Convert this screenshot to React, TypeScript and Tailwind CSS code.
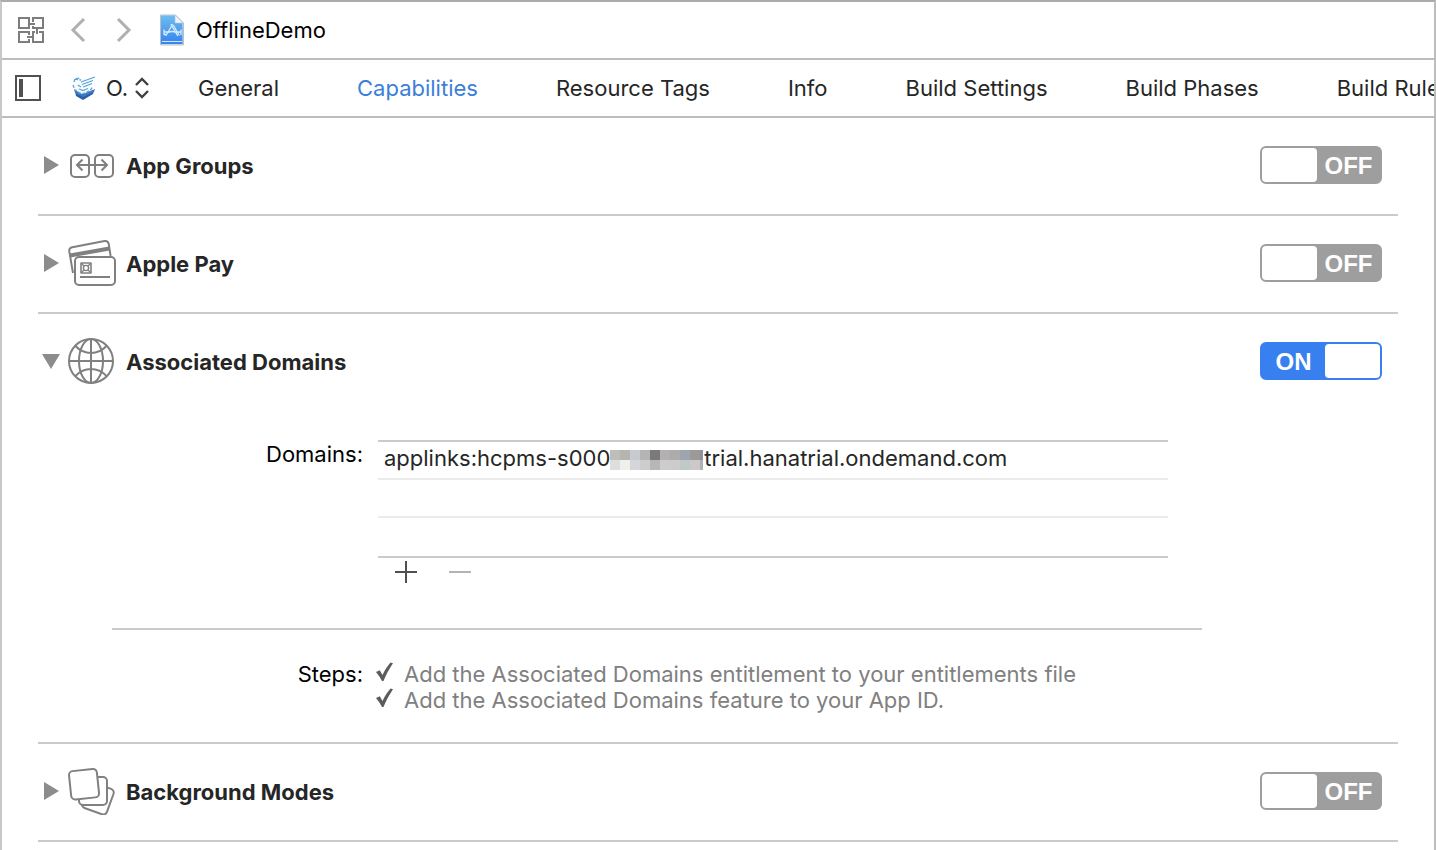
import { useState, type ReactNode } from "react";

const tabs = ["General", "Capabilities", "Resource Tags", "Info", "Build Settings", "Build Phases", "Build Rules"];

const steps = [
  "Add the Associated Domains entitlement to your entitlements file",
  "Add the Associated Domains feature to your App ID.",
];

const maskColors = [
  "#bfbdb8", "#b5b5b0", "#c8cad2", "#b2b5b4", "#7b797c", "#b2b0b0", "#aeabab", "#9fa5ae", "#9b9a94", "#8b93a3",
  "#dddfdf", "#f0f0ea", "#d5d5da", "#cfcccd", "#b7b7b9", "#cbcdce", "#cccccc", "#c2c7c7", "#cdc8c9", "#adb1ba",
];

function RelatedItemsIcon() {
  return (
    <svg width="28" height="28" viewBox="0 0 28 28" fill="none" stroke="#7d7d7d" strokeWidth="2" aria-hidden="true">
      <path d="M2 2h10v10H2zM16 2h10v10H16zM2 16h10v10H2zM16 16h10v10H16z" />
      <path d="M13 8h5M20 13v5M15 21h-5" stroke="white" strokeWidth="4" />
      <path d="M12 8h6M20 12v6M16 21h-6" />
    </svg>
  );
}

function ProjectFileIcon() {
  return (
    <svg width="26" height="32" viewBox="0 0 26 32" aria-hidden="true">
      <defs>
        <linearGradient id="paper" x1="0" y1="0" x2="0" y2="1">
          <stop offset="0" stopColor="#6dbdf0" />
          <stop offset="1" stopColor="#3583ee" />
        </linearGradient>
      </defs>
      <path d="M1.500 1h15l8 8v22h-23z" fill="#dfe5ec" stroke="#b9c0c8" />
      <path d="M2 1.500h14l7.500 7.500v21H2z" fill="url(#paper)" />
      <path d="M16 1v8h8z" fill="#eef4f9" stroke="#a9c5dc" strokeWidth="0.700" />
      <path d="M3 27.500h20" stroke="#cde6ff" />
      <g stroke="#d6ebff" strokeWidth="1.300" fill="none" strokeLinecap="round">
        <path d="M13.500 10.500L7 21.500M12 10.500l6.500 11M14.500 11.500l5.500 9.500M5 18h5M16 18h6M5 16v4.500M22 16v4.500M9 18.500q4-2 8 0M5 20.500h2" />
      </g>
    </svg>
  );
}

function TargetIcon() {
  return (
    <svg width="24" height="24" viewBox="0 0 24 24" aria-hidden="true">
      <path d="M3 15l8 4 11-5-1 4-10 6-7-4z" fill="#2a5ca8" />
      <path d="M2 13l8 5 13-5-1 3-11 5-8-4z" fill="#3f78c0" />
      <path d="M1 8l2 6 8 4 11-5 1-3-3-7-8-1-9 1z" fill="#fafdff" />
      <g stroke="#5ba3d6" strokeWidth="1.300" fill="none">
        <path d="M2 6l1-3 5-1M3 3l6 1M1 9l2 5 5 3 4 .5 6-3 3-4" strokeDasharray="3 1.500" />
        <path d="M9 6l14-5M10 8.500l11-4M11 11l9-3.500M6 9l3 2M7 13l4 1.500 5-2" />
      </g>
    </svg>
  );
}

function AppGroupsIcon() {
  return (
    <svg width="48" height="48" viewBox="0 0 48 48" fill="none" stroke="#808080" strokeWidth="2" aria-hidden="true">
      <rect x="3" y="14" width="18" height="22" rx="4" />
      <rect x="27" y="14" width="18" height="22" rx="4" />
      <path d="M9 24h30M14.500 18.500L9 24l5.500 5.500M33.500 18.500L39 24l-5.500 5.500" />
    </svg>
  );
}

function ApplePayIcon() {
  return (
    <svg width="48" height="48" viewBox="0 0 48 48" fill="none" stroke="#808080" strokeWidth="2" aria-hidden="true">
      <path d="M5 34L1.300 12.500Q.8 9 4.300 8.300L36.500 2Q40 1.500 40.700 4.800L42.600 17" />
      <path d="M2 16.500L41.500 9.500" strokeWidth="4" />
      <rect x="7" y="18" width="40" height="28" rx="4" fill="white" />
      <rect x="13" y="24" width="10" height="10" rx="0.500" strokeWidth="1.600" />
      <circle cx="18" cy="29" r="2.600" strokeWidth="1.400" />
      <path d="M13 24l3 3M23 24l-3 3M13 34l3-3M23 34l-3-3" strokeWidth="1.300" />
      <path d="M12 38h30" />
    </svg>
  );
}

function GlobeIcon() {
  return (
    <svg width="48" height="48" viewBox="0 0 48 48" fill="none" stroke="#808080" strokeWidth="2" aria-hidden="true">
      <circle cx="23" cy="24" r="22" />
      <ellipse cx="23" cy="24" rx="12" ry="22" />
      <path d="M23 2v44M1 24h44M7.500 9Q14 16 23 16T38.500 9M7.500 39Q14 32 23 32T38.500 39" />
    </svg>
  );
}

function BackgroundModesIcon() {
  return (
    <svg width="48" height="48" viewBox="0 0 48 48" fill="white" stroke="#808080" strokeWidth="2" aria-hidden="true">
      <rect x="16.500" y="18" width="26.500" height="27" rx="4" transform="rotate(20 30 31.500)" />
      <rect x="11" y="10" width="28" height="28" rx="4" />
      <rect x="2" y="3" width="28" height="28.500" rx="4" transform="rotate(-6 16 17)" />
    </svg>
  );
}

function CheckIcon() {
  return (
    <svg width="18" height="22" viewBox="0 0 18 22" aria-hidden="true">
      <path d="M0 11l3.800-1.700L6.500 14C9 9 11.500 5 14.500 1.600l2.500.6C13 8 10 14 7.500 20H6C4.500 17 2.500 14 0 11z" fill="#5c5c5c" />
    </svg>
  );
}

function Toggle({ label, initial }: { label: string; initial: boolean }) {
  const [on, setOn] = useState(initial);
  return (
    <button
      type="button"
      role="switch"
      aria-checked={on}
      aria-label={label}
      onClick={() => setOn(!on)}
      className={
        "flex h-[38px] w-[122px] shrink-0 items-stretch rounded-md border-2 font-['Liberation_Sans'] text-2xl font-bold text-white " +
        (on ? "border-[#3880f0] bg-[#3880f0]" : "flex-row-reverse border-[#9e9e9e] bg-[#9e9e9e]")
      }
    >
      <span className="flex flex-1 items-center justify-center pt-0.5">{on ? "ON" : "OFF"}</span>
      <span className="w-[55px] rounded-sm bg-white" />
    </button>
  );
}

type CapabilityProps = { name: string; icon: ReactNode; on?: boolean; children?: ReactNode };

function Capability({ name, icon, on = false, children }: CapabilityProps) {
  const [open, setOpen] = useState(on);
  return (
    <section className="border-b-2 border-[#cacaca]">
      <div className="flex h-24 items-center justify-between pr-4 pb-0.5">
        <h2>
          <button type="button" aria-expanded={open} onClick={() => setOpen(!open)} className="flex items-center font-bold text-[#262626]">
            <svg width="30" height="20" viewBox="0 0 30 20" fill="#8c8c8c" aria-hidden="true">
              {open ? <path d="M4 3h18l-9 15z" /> : <path d="M6 1v18l15-9z" />}
            </svg>
            {icon}
            <span className="ml-2.5 pt-0.5">{name}</span>
          </button>
        </h2>
        <Toggle label={name} initial={on} />
      </div>
      {open && children}
    </section>
  );
}

function MaskedDigits() {
  return (
    <svg width="93" height="20" viewBox="0 0 93 20" shapeRendering="crispEdges" role="img" aria-label="hidden digits" className="mt-1 shrink-0">
      {maskColors.map((color, i) => (
        <rect key={i} x={(i % 10) * 10} y={i < 10 ? 0 : 10} width="10" height="10" fill={color} />
      ))}
    </svg>
  );
}

function DomainSettings() {
  return (
    <div className="pt-[30px] pb-7">
      <div className="flex">
        <div id="domains-label" className="w-[325px] shrink-0 text-right text-black">Domains:</div>
        <div className="ml-[15px] w-[790px]">
          <table aria-labelledby="domains-label" className="w-full border-collapse border-y-2 border-[#cacaca]">
            <tbody>
              <tr className="h-[38px] border-b-2 border-[#ebebeb]">
                <td className="p-0 pb-1 pl-1.5">
                  <div className="flex items-center">
                    <span>applinks:hcpms-s000</span>
                    <MaskedDigits />
                    <span className="pl-px">trial.hanatrial.ondemand.com</span>
                  </div>
                </td>
              </tr>
              <tr className="h-[38px] border-b-2 border-[#ebebeb]"><td /></tr>
              <tr className="h-10"><td /></tr>
            </tbody>
          </table>
          <div className="flex gap-8 px-[17px] pt-[3px]">
            <button type="button" aria-label="Add domain">
              <svg width="22" height="22" viewBox="0 0 22 22" stroke="#505050" strokeWidth="2"><path d="M0 11h22M11 0v22" /></svg>
            </button>
            <button type="button" aria-label="Remove domain">
              <svg width="22" height="22" viewBox="0 0 22 22" stroke="#b4b4b4" strokeWidth="2"><path d="M0 11h22" /></svg>
            </button>
          </div>
        </div>
      </div>
      <div className="mt-[45px] mr-[196px] ml-[74px] border-t-2 border-[#cacaca]" />
      <div className="mt-[31px] mb-px flex leading-[26px]">
        <div className="w-[325px] shrink-0 text-right text-black">Steps:</div>
        <ul className="ml-[13px] text-[#808080]">
          {steps.map((step) => (
            <li key={step} className="flex gap-2.5">
              <CheckIcon />
              {step}
            </li>
          ))}
        </ul>
      </div>
    </div>
  );
}

export default function App() {
  const [tab, setTab] = useState("Capabilities");
  return (
    <div className="min-h-screen overflow-hidden border-x-2 border-t-2 border-t-[#ababab] border-r-[#bdbdbd] border-l-[#c8c8c8] bg-white font-[Inter,sans-serif] text-[22px] leading-7 text-[#262626]">
      <header className="flex h-[58px] items-center border-b-2 border-[#bdbdbd] pl-[15px] text-black">
        <button type="button" aria-label="Related items"><RelatedItemsIcon /></button>
        <button type="button" aria-label="Back" className="ml-6">
          <svg width="18" height="26" viewBox="0 0 18 26" fill="none" stroke="#b0b0b0" strokeWidth="3"><path d="M15 2L4 13l11 11" /></svg>
        </button>
        <button type="button" aria-label="Forward" className="ml-7">
          <svg width="18" height="26" viewBox="0 0 18 26" fill="none" stroke="#b0b0b0" strokeWidth="3"><path d="M3 2l11 11L3 24" /></svg>
        </button>
        <a href="#project" className="ml-[26px] flex items-center gap-[11px]"><ProjectFileIcon />OfflineDemo</a>
      </header>

      <nav className="flex h-[58px] items-center overflow-hidden border-b-2 border-[#bdbdbd] pl-[13px] whitespace-nowrap">
        <button type="button" aria-label="Show project list" className="shrink-0">
          <svg width="26" height="26" viewBox="0 0 26 26" aria-hidden="true">
            <path d="M1 1h24v24H1z" fill="none" stroke="#505050" strokeWidth="2" />
            <path d="M4 4h4v18H4z" fill="#505050" />
          </svg>
        </button>
        <label className="ml-[31px] flex shrink-0 items-center">
          <TargetIcon />
          <select aria-label="Target" className="ml-2.5 w-[29px] appearance-none bg-transparent">
            <option>O.</option>
          </select>
          <svg width="14" height="22" viewBox="0 0 14 22" fill="none" stroke="#404040" strokeWidth="2.400" aria-hidden="true">
            <path d="M1 8l6-6 6 6M1 14l6 6 6-6" />
          </svg>
        </label>
        <div role="tablist" className="ml-[49px] flex gap-[78px]">
          {tabs.map((name) => (
            <button
              key={name}
              type="button"
              role="tab"
              aria-selected={tab === name}
              onClick={() => setTab(name)}
              className={"shrink-0 " + (tab === name ? "text-[#3b7fd9]" : "")}
            >
              {name}
            </button>
          ))}
        </div>
      </nav>

      <main className="px-9">
        <Capability name="App Groups" icon={<AppGroupsIcon />} />
        <Capability name="Apple Pay" icon={<ApplePayIcon />} />
        <Capability name="Associated Domains" icon={<GlobeIcon />} on>
          <DomainSettings />
        </Capability>
        <Capability name="Background Modes" icon={<BackgroundModesIcon />} />
      </main>
    </div>
  );
}
